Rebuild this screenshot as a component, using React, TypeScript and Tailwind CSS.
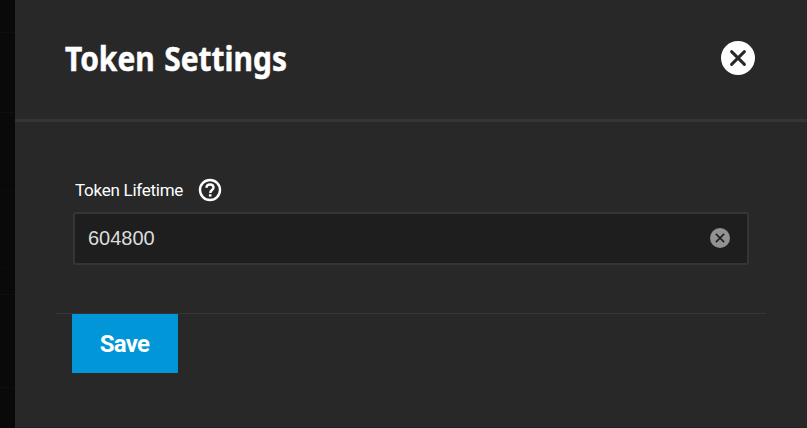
import { useState } from "react";

function CloseIcon() {
  return (
    <svg width="34" height="34" viewBox="0 0 34 34" fill="none">
      <circle cx="17" cy="17" r="17" fill="#fff" />
      <path
        d="M10.6 10.6 23.4 23.4M23.4 10.6 10.6 23.4"
        stroke="#282828"
        strokeWidth="3"
        strokeLinecap="round"
      />
    </svg>
  );
}

function HelpIcon() {
  return (
    <svg width="24" height="24" viewBox="0 0 24 24" fill="none" stroke="#fff">
      <circle cx="12" cy="12" r="10" strokeWidth="2.4" />
      <path
        d="M8.5 9.8c0-2 1.5-3.3 3.5-3.3s3.5 1.3 3.5 3.1c0 2.3-3.2 2.6-3.2 5.3"
        strokeWidth="2.4"
      />
      <path d="M12.2 16.2v2.4" strokeWidth="2.6" />
    </svg>
  );
}

function ClearIcon() {
  return (
    <svg width="20" height="20" viewBox="0 0 20 20" fill="none">
      <circle cx="10" cy="10" r="10" fill="#929292" />
      <path
        d="M5.9 5.9 14.1 14.1M14.1 5.9 5.9 14.1"
        stroke="#1e1e1e"
        strokeWidth="1.6"
      />
    </svg>
  );
}

export default function App() {
  const [lifetime, setLifetime] = useState("604800");

  return (
    <div className="flex h-[428px] w-[807px] overflow-hidden bg-[#090909] font-['Roboto',sans-serif]">
      <div className="flex w-[15px] shrink-0 flex-col">
        <div className="h-[33px] border-b border-[#0e0e0e]" />
        <div className="h-20 border-b border-[#0e0e0e]" />
        <div className="h-[78px] border-b border-[#0c0c0c]" />
        <div className="h-[77px] border-b border-[#0c0c0c]" />
        <div className="h-[27px] border-b border-[#0e0e0e]" />
        <div className="h-[93px] border-b border-[#0e0e0e]" />
      </div>

      <div className="flex grow flex-col border-b border-[#242222] bg-[#282828]">
        <div className="flex h-[122px] items-center justify-between border-b-[3px] border-[#353535] pr-[52px] pl-[50px]">
          <h1 className="-mt-1 origin-left scale-x-[0.88] font-['Noto_Sans',sans-serif] text-[34px] leading-none font-bold whitespace-nowrap text-white [-webkit-text-stroke:0.5px_white] [word-spacing:2px]">
            Token Settings
          </h1>
          <button type="button" aria-label="Close" className="-mt-[3px]">
            <CloseIcon />
          </button>
        </div>

        <div className="pt-14 pr-[41px] pl-[41px]">
          <div className="px-[17px]">
            <div className="flex h-6 items-center gap-[14.5px] pl-[2px] text-white">
              <label
                htmlFor="lifetime"
                className="text-[17px] leading-none tracking-[-0.26px]"
              >
                Token Lifetime
              </label>
              <HelpIcon />
            </div>
            <div className="mt-[10px] flex h-[53px] items-center rounded-[3px] border-2 border-[#353535] bg-[#1e1e1e] pr-[17px] pb-[2px] pl-[13px]">
              <input
                id="lifetime"
                value={lifetime}
                onChange={(e) => setLifetime(e.target.value)}
                className="min-w-0 grow bg-transparent font-['Liberation_Sans',sans-serif] text-[20px] leading-6 text-[#dcdcdc] outline-none"
              />
              <button
                type="button"
                aria-label="Clear"
                onClick={() => setLifetime("")}
              >
                <ClearIcon />
              </button>
            </div>
          </div>

          <div className="mt-12 border-t border-[#353535] pl-4">
            <button
              type="button"
              className="h-[59px] w-[106px] bg-[#0096d8] pr-[1px] text-[24px] leading-none font-bold tracking-[-0.7px] text-white"
            >
              Save
            </button>
          </div>
        </div>
      </div>
    </div>
  );
}
